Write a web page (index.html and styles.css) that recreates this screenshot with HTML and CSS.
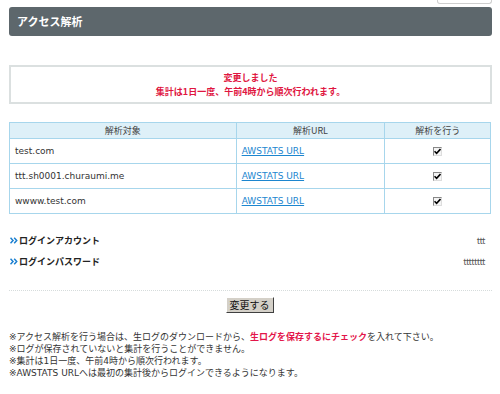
FILE: index.html
```html
<!DOCTYPE html>
<html lang="ja">
<head>
<meta charset="utf-8">
<link rel="stylesheet" href="styles.css">
</head>
<body>
<div class="tabbar"><div class="tab"></div></div>
<div class="header">アクセス解析</div>

<div class="message">
  <p>変更しました</p>
  <p>集計は1日一度、午前4時から順次行われます。</p>
</div>

<table class="stats">
  <colgroup><col class="c1"><col class="c2"><col class="c3"></colgroup>
  <thead>
    <tr><th>解析対象</th><th>解析URL</th><th>解析を行う</th></tr>
  </thead>
  <tbody>
    <tr><td>test.com</td><td><a href="#">AWSTATS URL</a></td><td class="chk"><span class="cb"><svg width="7" height="7" viewBox="0 0 7 7"><path d="M0.5 3.2 L2.6 5.4 L6.5 1" fill="none" stroke="#000" stroke-width="1.6"/></svg></span></td></tr>
    <tr><td>ttt.sh0001.churaumi.me</td><td><a href="#">AWSTATS URL</a></td><td class="chk"><span class="cb"><svg width="7" height="7" viewBox="0 0 7 7"><path d="M0.5 3.2 L2.6 5.4 L6.5 1" fill="none" stroke="#000" stroke-width="1.6"/></svg></span></td></tr>
    <tr><td>wwww.test.com</td><td><a href="#">AWSTATS URL</a></td><td class="chk"><span class="cb"><svg width="7" height="7" viewBox="0 0 7 7"><path d="M0.5 3.2 L2.6 5.4 L6.5 1" fill="none" stroke="#000" stroke-width="1.6"/></svg></span></td></tr>
  </tbody>
</table>

<div class="login">
  <div class="lrow"><span class="label"><svg class="chev" width="8" height="7" viewBox="0 0 8 7"><path d="M0.5 0.8 L3 3.5 L0.5 6.2 M4.2 0.8 L6.7 3.5 L4.2 6.2" fill="none" stroke="#1a7fd0" stroke-width="1.5"/></svg>ログインアカウント</span><span class="val">ttt</span></div>
  <div class="lrow"><span class="label"><svg class="chev" width="8" height="7" viewBox="0 0 8 7"><path d="M0.5 0.8 L3 3.5 L0.5 6.2 M4.2 0.8 L6.7 3.5 L4.2 6.2" fill="none" stroke="#1a7fd0" stroke-width="1.5"/></svg>ログインパスワード</span><span class="val">tttttttt</span></div>
</div>

<div class="sep"></div>

<div class="actions"><button class="btn" type="button">変更する</button></div>

<div class="notes">
  <p>※アクセス解析を行う場合は、生ログのダウンロードから、<strong class="red">生ログを保存するにチェック</strong>を入れて下さい。</p>
  <p>※ログが保存されていないと集計を行うことができません。</p>
  <p>※集計は1日一度、午前4時から順次行われます。</p>
  <p>※AWSTATS URLへは最初の集計後からログインできるようになります。</p>
</div>
</body>
</html>
```

FILE: styles.css
```css
html, body { margin: 0; padding: 0; background: #fff; }
body {
  font-family: "DejaVu Sans", "Noto Sans CJK JP", sans-serif;
  font-size: 9px;
  color: #333;
  width: 500px;
}
p { margin: 0; }

.tabbar { display: flex; justify-content: flex-end; padding-right: 8px; height: 4px; }
.tab {
  width: 53px; height: 3px;
  border: 1px solid #cfcfcf; border-top: none;
  border-radius: 0 0 3px 3px;
}

.header {
  margin: 3px 8px 0 9px;
  height: 29px;
  line-height: 29px;
  background: #5d676c;
  border-radius: 3px;
  color: #fff;
  font-family: "Noto Sans CJK JP", sans-serif;
  font-weight: bold;
  font-size: 11px;
  padding-left: 8px;
}

.message {
  margin: 29px 8px 0 9px;
  height: 35px;
  border: 2px solid #dbe0e0;
  display: flex; flex-direction: column; justify-content: center; align-items: center;
  color: #e0163f;
  font-family: "Noto Sans CJK JP", sans-serif;
  font-weight: bold;
  font-size: 9px;
  line-height: 14px;
}

.stats {
  margin: 18px 0 0 9px;
  width: 482px;
  border-collapse: collapse;
  border: 1px solid #a7d6ec;
}
.stats col.c1 { width: 227px; }
.stats col.c2 { width: 149px; }
.stats col.c3 { width: 106px; }
.stats th {
  height: 15px;
  background: #def0f8;
  border: 1px solid #a7d6ec;
  font-weight: normal;
  color: #444;
  font-family: "Noto Sans CJK JP", sans-serif;
  font-size: 9px;
  padding: 0;
}
.stats td {
  height: 24px;
  border: 1px solid #a7d6ec;
  padding: 0 0 0 5px;
  color: #333;
}
.stats a { color: #1c86cf; text-decoration: underline; }
.stats td.chk { text-align: center; padding: 0; }
.cb {
  display: inline-flex; align-items: center; justify-content: center;
  width: 7px; height: 7px;
  border: 1px solid #888; border-right-color: #ddd; border-bottom-color: #ddd;
  background: #f4f4f4;
  vertical-align: middle;
}

.login { margin: 16px 8px 0 10px; }
.lrow {
  display: flex; justify-content: space-between; align-items: center;
  height: 21px;
  color: #222;
}
.label {
  display: flex; align-items: center;
  font-family: "Noto Sans CJK JP", sans-serif;
  font-weight: bold;
  font-size: 9px;
}
.chev { margin-right: 1px; }
.val { font-family: "Noto Sans CJK JP", sans-serif; font-size: 9px; color: #555; padding-right: 7px; letter-spacing: -0.5px; }

.sep { margin: 18px 8px 0 9px; border-top: 1px dotted #d6dcdc; }

.actions { display: flex; justify-content: center; margin-top: 6px; }
.btn {
  font-family: "Noto Sans CJK JP", sans-serif;
  font-size: 10px;
  color: #111;
  background: #d4d0c8;
  border: 1px solid; border-color: #fff #404040 #404040 #fff;
  padding: 0 3px;
  height: 16px;
  line-height: 14px;
  margin-left: -1px;
}

.notes {
  margin: 18px 0 0 9px;
  font-family: "DejaVu Sans", "Noto Sans CJK JP", sans-serif;
  font-size: 9px;
  line-height: 12px;
  color: #333;
}
.red { color: #e3164a; }
```
